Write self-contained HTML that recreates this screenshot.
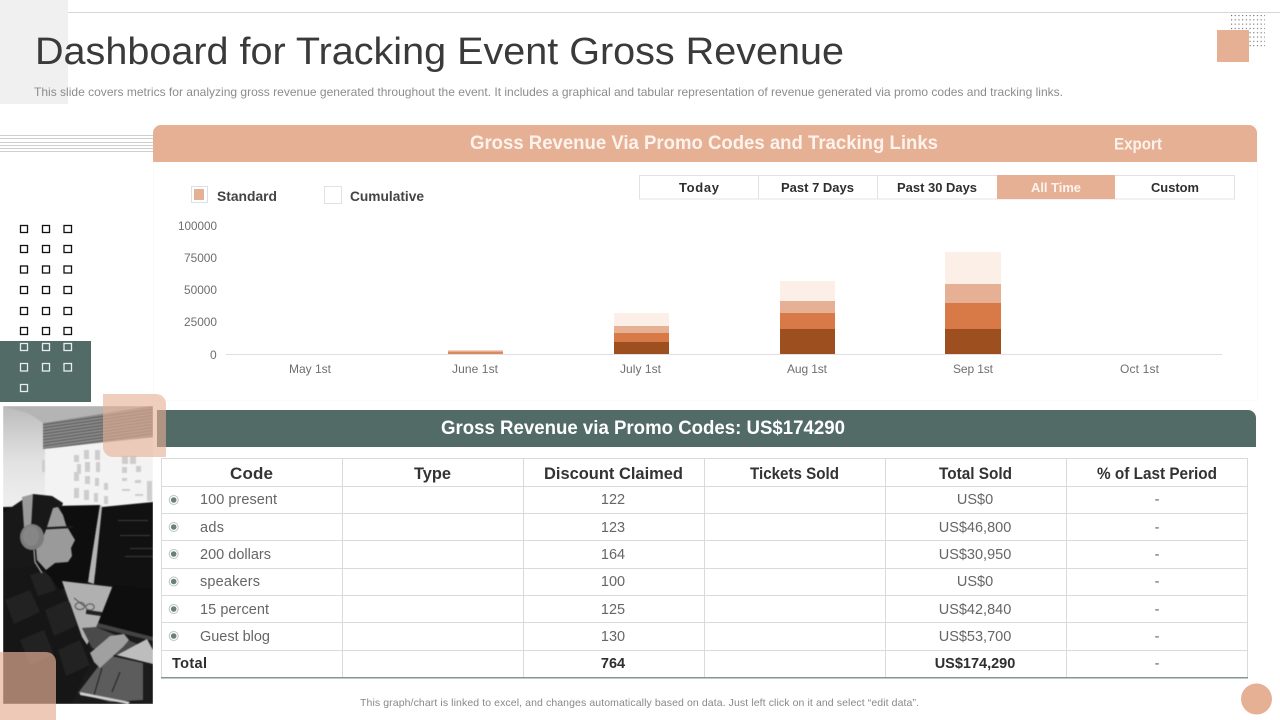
<!DOCTYPE html>
<html lang="en">
<head>
<meta charset="utf-8">
<title>Dashboard for Tracking Event Gross Revenue</title>
<style>
html,body{margin:0;padding:0;background:#fff;width:1280px;height:720px;overflow:hidden}
svg{display:block;position:absolute;left:0;top:0}
text{font-family:"Liberation Sans",sans-serif}
.b{font-weight:bold}
.ax{font-size:12px;fill:#6e6e6e}
.tab{font-size:13px;font-weight:bold;fill:#2e2e2e;text-anchor:start}
.th{font-size:17px;font-weight:bold;fill:#333}
.td{font-size:14.5px;fill:#666}
.c{text-anchor:middle}
.sq{fill:none;stroke:#111;stroke-width:1.3}
.sw{fill:none;stroke:#e6eeec;stroke-width:1.3}
</style>
</head>
<body>
<svg width="1280" height="720" viewBox="0 0 1280 720" xmlns="http://www.w3.org/2000/svg">
<defs>
<pattern id="dots" x="1231" y="15" width="3.700" height="4.300" patternUnits="userSpaceOnUse"><rect width="1.100" height="1.100" fill="#666"/></pattern>
<clipPath id="ph"><rect x="3" y="406" width="150" height="298"/></clipPath>
<clipPath id="shirt"><path d="M3,566 L33,560 L50,577 L70,603 L82,637 L95,657 L83,677 L72,704 L3,704Z"/></clipPath>
<linearGradient id="wall" x1="0" y1="0" x2="0" y2="1"><stop offset="0" stop-color="#bcbcbc"/><stop offset=".5" stop-color="#e2e2e2"/><stop offset="1" stop-color="#f2f2f2"/></linearGradient>
<pattern id="vent" width="4" height="3" patternUnits="userSpaceOnUse" patternTransform="rotate(-8)"><rect width="4" height="3" fill="#8e8e8e"/><rect width="4" height="1.200" fill="#5c5c5c"/></pattern>
<filter id="soft" x="0" y="0" width="1" height="1" color-interpolation-filters="sRGB"><feGaussianBlur stdDeviation=".6"/></filter>
</defs>

<!-- top decoration -->
<rect x="0" y="0" width="68" height="104" fill="#f0f0f0"/>
<rect x="68" y="12" width="1212" height="1" fill="#d6d6d6"/>
<rect x="1231" y="15" width="34" height="33" fill="url(#dots)"/>
<rect x="1217" y="30" width="32" height="32" fill="#e6b095"/>

<text x="35" y="64" font-size="38" fill="#3a3a3a" textLength="809" lengthAdjust="spacingAndGlyphs">Dashboard for Tracking Event Gross Revenue</text>
<text x="34" y="96" font-size="12" fill="#8c8c8c" textLength="1029" lengthAdjust="spacingAndGlyphs">This slide covers metrics for analyzing gross revenue generated throughout the event. It includes a graphical and tabular representation of revenue generated via promo codes and tracking links.</text>

<!-- stripes -->
<g fill="#cfcfcf">
<rect x="0" y="135" width="153" height="1"/><rect x="0" y="138" width="153" height="1"/>
<rect x="0" y="142" width="153" height="1"/><rect x="0" y="145" width="153" height="1"/>
<rect x="0" y="148" width="153" height="1"/><rect x="0" y="151" width="153" height="1"/>
</g>

<!-- chart panel -->
<rect x="153.500" y="125.500" width="1104" height="275" fill="#fff" stroke="#fafafa"/>
<path d="M153 162V133a8 8 0 0 1 8-8H1249a8 8 0 0 1 8 8V162Z" fill="#e6b095"/>
<text x="470" y="149" font-size="19" class="b" fill="#fdf3ec" textLength="468" lengthAdjust="spacingAndGlyphs">Gross Revenue Via Promo Codes and Tracking Links</text>
<text x="1114" y="149.500" font-size="16.500" class="b" fill="#fdf3ec" textLength="48" lengthAdjust="spacingAndGlyphs">Export</text>

<!-- legend -->
<rect x="191.500" y="186.500" width="16" height="16" fill="#fff" stroke="#d9e1e8"/>
<rect x="194" y="189" width="10" height="11" fill="#e6b095"/>
<text x="217" y="201" font-size="14" class="b" fill="#444" textLength="60" lengthAdjust="spacingAndGlyphs">Standard</text>
<rect x="324.500" y="186.500" width="17" height="17" fill="#fff" stroke="#dfe2e6"/>
<text x="350" y="201" font-size="14" class="b" fill="#444" textLength="74" lengthAdjust="spacingAndGlyphs">Cumulative</text>

<!-- tabs -->
<rect x="639.500" y="175.500" width="595" height="23.500" fill="#fff" stroke="#e8dfe3"/>
<rect x="997" y="175" width="118" height="24" fill="#e6b095"/>
<rect x="758" y="175" width="1" height="24" fill="#e8dfe3"/>
<rect x="877" y="175" width="1" height="24" fill="#e8dfe3"/>
<text x="679" y="192" class="tab" textLength="40" lengthAdjust="spacing">Today</text>
<text x="781" y="192" class="tab" textLength="73" lengthAdjust="spacingAndGlyphs">Past 7 Days</text>
<text x="897" y="192" class="tab" textLength="80" lengthAdjust="spacingAndGlyphs">Past 30 Days</text>
<text x="1031" y="192" class="tab" style="fill:#fdf3ec" textLength="50" lengthAdjust="spacingAndGlyphs">All Time</text>
<text x="1151" y="192" class="tab" textLength="48" lengthAdjust="spacingAndGlyphs">Custom</text>

<!-- chart axes -->
<text x="178" y="230" class="ax" textLength="39" lengthAdjust="spacingAndGlyphs">100000</text>
<text x="184" y="262" class="ax" textLength="33" lengthAdjust="spacingAndGlyphs">75000</text>
<text x="184" y="294" class="ax" textLength="33" lengthAdjust="spacingAndGlyphs">50000</text>
<text x="184" y="326" class="ax" textLength="33" lengthAdjust="spacingAndGlyphs">25000</text>
<text x="210" y="359" class="ax">0</text>
<rect x="226" y="354" width="996" height="1" fill="#e2dde0"/>
<text x="289" y="373" class="ax" textLength="42" lengthAdjust="spacing">May 1st</text>
<text x="452" y="373" class="ax" textLength="46" lengthAdjust="spacing">June 1st</text>
<text x="620" y="373" class="ax" textLength="41" lengthAdjust="spacing">July 1st</text>
<text x="787" y="373" class="ax" textLength="40" lengthAdjust="spacing">Aug 1st</text>
<text x="953" y="373" class="ax" textLength="40" lengthAdjust="spacing">Sep 1st</text>
<text x="1120" y="373" class="ax" textLength="39" lengthAdjust="spacing">Oct 1st</text>

<!-- bars -->
<rect x="448" y="350" width="55" height="1.500" fill="#f3d3c0"/>
<rect x="448" y="351.500" width="55" height="2.500" fill="#d98a60"/>
<rect x="614" y="313" width="55" height="13" fill="#fbefe8"/>
<rect x="614" y="326" width="55" height="7" fill="#e6b095"/>
<rect x="614" y="333" width="55" height="9" fill="#d87a47"/>
<rect x="614" y="342" width="55" height="12" fill="#9e4f20"/>
<rect x="780" y="281" width="55" height="20" fill="#fbefe8"/>
<rect x="780" y="301" width="55" height="12" fill="#e6b095"/>
<rect x="780" y="313" width="55" height="16" fill="#d87a47"/>
<rect x="780" y="329" width="55" height="25" fill="#9e4f20"/>
<rect x="945" y="252" width="56" height="32" fill="#fbefe8"/>
<rect x="945" y="284" width="56" height="19" fill="#e6b095"/>
<rect x="945" y="303" width="56" height="26" fill="#d87a47"/>
<rect x="945" y="329" width="56" height="25" fill="#9e4f20"/>

<!-- left green block -->
<rect x="0" y="341" width="91" height="61" fill="#526b66"/>
<rect class="sq" x="20.500" y="225.500" width="7" height="7"/><rect class="sq" x="42.500" y="225.500" width="7" height="7"/><rect class="sq" x="64" y="225.500" width="7.500" height="7"/>
<rect class="sq" x="20.500" y="245.500" width="7" height="7"/><rect class="sq" x="42.500" y="245.500" width="7" height="7"/><rect class="sq" x="64" y="245.500" width="7.500" height="7"/>
<rect class="sq" x="20.500" y="266" width="7" height="7"/><rect class="sq" x="42.500" y="266" width="7" height="7"/><rect class="sq" x="64" y="266" width="7.500" height="7"/>
<rect class="sq" x="20.500" y="286.500" width="7" height="7"/><rect class="sq" x="42.500" y="286.500" width="7" height="7"/><rect class="sq" x="64" y="286.500" width="7.500" height="7"/>
<rect class="sq" x="20.500" y="307.500" width="7" height="7"/><rect class="sq" x="42.500" y="307.500" width="7" height="7"/><rect class="sq" x="64" y="307.500" width="7.500" height="7"/>
<rect class="sq" x="20.500" y="327.500" width="7" height="7"/><rect class="sq" x="42.500" y="327.500" width="7" height="7"/><rect class="sq" x="64" y="327.500" width="7.500" height="7"/>
<rect class="sw" x="20.500" y="343.500" width="7" height="7"/><rect class="sw" x="42.500" y="343.500" width="7" height="7"/><rect class="sw" x="64" y="343.500" width="7.500" height="7"/>
<rect class="sw" x="20.500" y="363.500" width="7" height="7.500"/><rect class="sw" x="42.500" y="363.500" width="7" height="7.500"/><rect class="sw" x="64" y="363.500" width="7.500" height="7.500"/>
<rect class="sw" x="20.500" y="384.500" width="7" height="7"/>

<!-- green header -->
<path d="M157 447V410H1248a8 8 0 0 1 8 8V447Z" fill="#526b66"/>
<text x="441" y="434" font-size="19" class="b" fill="#fff" textLength="404" lengthAdjust="spacingAndGlyphs">Gross Revenue via Promo Codes: US$174290</text>

<!-- photo -->
<g clip-path="url(#ph)">
<g filter="url(#soft)">
<rect x="3" y="406" width="150" height="298" fill="#f3f3f3"/>
<rect x="3" y="406" width="42" height="110" fill="url(#wall)"/>
<polygon points="3,406 153,406 43,423 30,414" fill="#b4b4b4"/>
<polygon points="43,423 153,406 153,437 43,449" fill="url(#vent)"/>
<g fill="#cdcdcd">
<rect x="74" y="455" width="5" height="7"/><rect x="84" y="450" width="5" height="9"/><rect x="95" y="450" width="5" height="10"/><rect x="122" y="456" width="6" height="8"/><rect x="130" y="456" width="6" height="8"/>
<rect x="42" y="460" width="3" height="12"/><rect x="77" y="464" width="4" height="10"/><rect x="85" y="462" width="5" height="10"/><rect x="96" y="462" width="4" height="10"/><rect x="122" y="467" width="5" height="6"/><rect x="136" y="466" width="5" height="6"/>
<rect x="74" y="472" width="5" height="9"/><rect x="85" y="476" width="5" height="8"/><rect x="95" y="478" width="4" height="8"/><rect x="104" y="483" width="4" height="7"/><rect x="122" y="478" width="5" height="3"/><rect x="135" y="480" width="6" height="3"/><rect x="147" y="481" width="5" height="20"/>
<rect x="74" y="488" width="5" height="10"/><rect x="84" y="490" width="5" height="10"/><rect x="94" y="493" width="4" height="9"/><rect x="104" y="496" width="4" height="8"/><rect x="122" y="489" width="8" height="2"/><rect x="135" y="494" width="8" height="2"/>
</g>
<!-- dark base for lower photo -->
<rect x="3" y="575" width="150" height="129" fill="#1a1a1a"/>
<!-- monitors -->
<polygon points="3,507 100,505 88,582 60,590 3,590" fill="#0e0e0e"/>
<polygon points="100,505 102,506 94,584 88,582" fill="#b4b4b4"/>
<polygon points="102,507 153,502 153,590 113,586 94,584" fill="#111"/>
<g fill="#3c3c3c"><rect x="120" y="535" width="30" height="1"/><rect x="130" y="548" width="23" height="1"/><rect x="125" y="556" width="28" height="1"/><rect x="118" y="520" width="30" height="1"/></g>
<!-- desk -->
<polygon points="62,581 113,587 98,625 84,650 72,610" fill="#b0b0b0"/>
<path d="M74,598 L84,606 M76,604 a4 3 0 1 0 8 4 a4 3 0 1 0 -8 -4 M86,606 a4 3 0 1 0 8 2 a4 3 0 1 0 -8 -2" stroke="#555" stroke-width="1" fill="none"/>
<rect x="86" y="611" width="16" height="4" fill="#222" transform="rotate(8 94 613)"/>
<polygon points="113,585 153,589 153,637 98,623" fill="#0e0e0e"/>
<polygon points="98,623 153,637 153,641 96,627" fill="#444"/>
<polygon points="82,628 96,627 140,645 118,655 92,648" fill="#4a4a4a"/>
<!-- lower desk -->
<polygon points="117,655 147,639 153,650 153,664 112,654" fill="#bdbdbd"/>
<polygon points="78,693 107,655 147,664 143,700 110,702" fill="#5c5c5c"/>
<path d="M94,695 L102,668 M112,692 L120,672" stroke="#1e1e1e" stroke-width="1" fill="none"/>
<rect x="143" y="663" width="7" height="41" fill="#1c1c1c"/>
<polygon points="80,692 130,702 128,704 80,695" fill="#d0d0d0"/>
<!-- shirt -->
<path d="M3,566 L33,560 L50,577 L70,603 L82,637 L95,657 L83,677 L72,704 L3,704Z" fill="#161616"/>
<g clip-path="url(#shirt)" fill="#222">
<polygon points="5,600 30,590 40,612 14,624"/>
<polygon points="45,610 68,600 78,625 54,636"/>
<polygon points="20,640 44,630 54,655 30,665"/>
<polygon points="58,650 80,640 90,665 66,676"/>
<polygon points="30,575 48,570 56,590 38,596"/>
</g>
<!-- arm -->
<path d="M90,653 L110,636 L124,634 L129,640 L123,647 L100,668 L94,662Z" fill="#a0a0a0"/>
<!-- hair -->
<path d="M3,513 L22,500 L33,494 L52,496 L63,503 L60,512 L50,530 L46,560 L33,566 L3,570Z" fill="#181818"/>
<!-- neck and face -->
<path d="M53,508 L58,507 L63,515 L66,525 L75,540 L71,548 L72,556 L68,562 L55,563 L46,570 L37,560 L36,548 L44,535 L47,527Z" fill="#9a9a9a"/>
<rect x="46" y="526.500" width="27" height="2.200" fill="#1a1a1a" transform="rotate(-3 60 527)"/>
<!-- headphones -->
<path d="M22,497 L33,494 L31,528 L24,528Z" fill="#9a9a9a"/>
<ellipse cx="32" cy="537" rx="12" ry="13" fill="#7c7c7c"/>
<ellipse cx="31" cy="536" rx="8" ry="10" fill="#868686"/>
<path d="M34,550 L35,562 L42,573" stroke="#aaa" stroke-width="1.200" fill="none"/>
</g>
</g>

<!-- peach overlays -->
<path d="M103 394H156a10 10 0 0 1 10 10V457H113a10 10 0 0 1-10-10Z" fill="#e6b095" fill-opacity=".62"/>
<path d="M0 652H46a10 10 0 0 1 10 10V720H0Z" fill="#e6b095" fill-opacity=".68"/>

<!-- table -->
<g fill="#dadada">
<rect x="161" y="458" width="1087" height="1"/>
<rect x="161" y="486" width="1087" height="1"/>
<rect x="161" y="513" width="1087" height="1"/>
<rect x="161" y="540" width="1087" height="1"/>
<rect x="161" y="568" width="1087" height="1"/>
<rect x="161" y="595" width="1087" height="1"/>
<rect x="161" y="622" width="1087" height="1"/>
<rect x="161" y="650" width="1087" height="1"/>
<rect x="161" y="458" width="1" height="220"/>
<rect x="342" y="458" width="1" height="220"/>
<rect x="523" y="458" width="1" height="220"/>
<rect x="704" y="458" width="1" height="220"/>
<rect x="885" y="458" width="1" height="220"/>
<rect x="1066" y="458" width="1" height="220"/>
<rect x="1247" y="458" width="1" height="220"/>
</g>
<rect x="161" y="677" width="1087" height="1.500" fill="#85968f"/>
<text x="230" y="479" class="th" textLength="43" lengthAdjust="spacing">Code</text>
<text x="414" y="479" class="th" textLength="37" lengthAdjust="spacingAndGlyphs">Type</text>
<text x="544" y="479" class="th" textLength="139" lengthAdjust="spacingAndGlyphs">Discount Claimed</text>
<text x="750" y="479" class="th" textLength="89" lengthAdjust="spacingAndGlyphs">Tickets Sold</text>
<text x="939" y="479" class="th" textLength="73" lengthAdjust="spacingAndGlyphs">Total Sold</text>
<text x="1097" y="479" class="th" textLength="120" lengthAdjust="spacingAndGlyphs">% of Last Period</text>

<g fill="#6b8079">
<circle cx="173.700" cy="500" r="2.800"/><circle cx="173.700" cy="527" r="2.800"/><circle cx="173.700" cy="554" r="2.800"/><circle cx="173.700" cy="581.500" r="2.800"/><circle cx="173.700" cy="609" r="2.800"/><circle cx="173.700" cy="636" r="2.800"/>
</g>
<g fill="none" stroke="#b9c4c0" stroke-width="1">
<circle cx="173.700" cy="500" r="4.500"/><circle cx="173.700" cy="527" r="4.500"/><circle cx="173.700" cy="554" r="4.500"/><circle cx="173.700" cy="581.500" r="4.500"/><circle cx="173.700" cy="609" r="4.500"/><circle cx="173.700" cy="636" r="4.500"/>
</g>

<text x="200" y="504" class="td" textLength="77" lengthAdjust="spacing">100 present</text>
<text x="200" y="532" class="td" textLength="24" lengthAdjust="spacing">ads</text>
<text x="200" y="559" class="td" textLength="71" lengthAdjust="spacing">200 dollars</text>
<text x="200" y="586" class="td" textLength="60" lengthAdjust="spacing">speakers</text>
<text x="200" y="614" class="td" textLength="69" lengthAdjust="spacing">15 percent</text>
<text x="200" y="641" class="td" textLength="70" lengthAdjust="spacing">Guest blog</text>
<text x="172" y="668" class="td b" style="fill:#2e2e2e" textLength="35" lengthAdjust="spacing">Total</text>

<text x="613" y="504" class="td c">122</text>
<text x="613" y="532" class="td c">123</text>
<text x="613" y="559" class="td c">164</text>
<text x="613" y="586" class="td c">100</text>
<text x="613" y="614" class="td c">125</text>
<text x="613" y="641" class="td c">130</text>
<text x="613" y="668" class="td c b" style="fill:#2e2e2e">764</text>

<text x="975" y="504" class="td c">US$0</text>
<text x="975" y="532" class="td c">US$46,800</text>
<text x="975" y="559" class="td c">US$30,950</text>
<text x="975" y="586" class="td c">US$0</text>
<text x="975" y="614" class="td c">US$42,840</text>
<text x="975" y="641" class="td c">US$53,700</text>
<text x="975" y="668" class="td c b" style="fill:#2e2e2e">US$174,290</text>

<text x="1157" y="504" class="td c">-</text>
<text x="1157" y="532" class="td c">-</text>
<text x="1157" y="559" class="td c">-</text>
<text x="1157" y="586" class="td c">-</text>
<text x="1157" y="614" class="td c">-</text>
<text x="1157" y="641" class="td c">-</text>
<text x="1157" y="668" class="td c">-</text>

<text x="360" y="706" font-size="10.500" fill="#888" textLength="559" lengthAdjust="spacing">This graph/chart is linked to excel, and changes automatically based on data. Just left click on it and select “edit data”.</text>

<circle cx="1256.500" cy="699" r="15.500" fill="#e6b095"/>
</svg>
</body>
</html>
